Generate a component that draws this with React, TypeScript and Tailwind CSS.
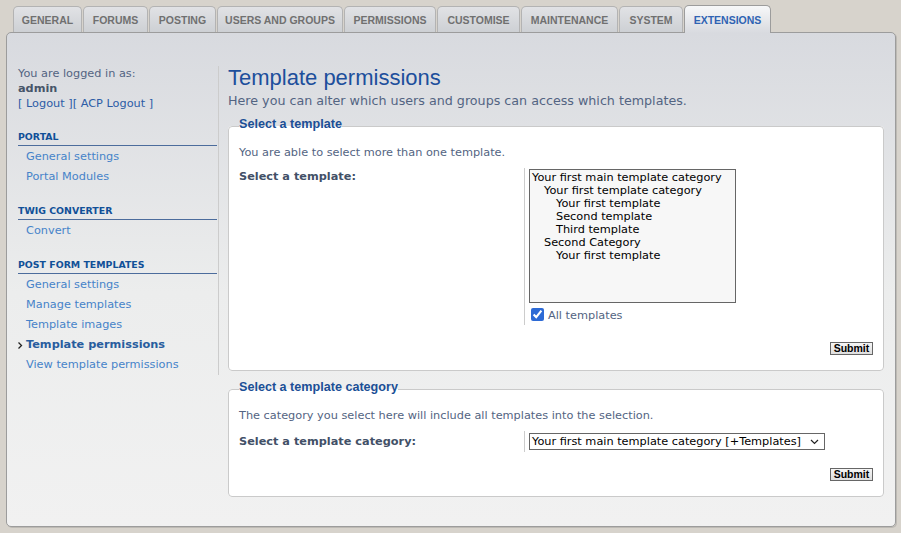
import React from 'react';

const tabs = [
  { label: 'GENERAL', width: 'w-[69px]' },
  { label: 'FORUMS', width: 'w-[65px]' },
  { label: 'POSTING', width: 'w-[67px]' },
  { label: 'USERS AND GROUPS', width: 'w-[126px]' },
  { label: 'PERMISSIONS', width: 'w-[92px]' },
  { label: 'CUSTOMISE', width: 'w-[83px]' },
  { label: 'MAINTENANCE', width: 'w-[97px]' },
  { label: 'SYSTEM', width: 'w-[64px]' },
  { label: 'EXTENSIONS', width: 'w-[87px]', active: true },
];

const menu = [
  { title: 'PORTAL', items: ['General settings', 'Portal Modules'] },
  { title: 'TWIG CONVERTER', items: ['Convert'] },
  {
    title: 'POST FORM TEMPLATES',
    items: ['General settings', 'Manage templates', 'Template images', 'Template permissions', 'View template permissions'],
  },
];

const activeItem = 'Template permissions';

const indents = ['pl-0', 'pl-[12px]', 'pl-[24px]'];

const templates = [
  { name: 'Your first main template category', depth: 0 },
  { name: 'Your first template category', depth: 1 },
  { name: 'Your first template', depth: 2 },
  { name: 'Second template', depth: 2 },
  { name: 'Third template', depth: 2 },
  { name: 'Second Category', depth: 1 },
  { name: 'Your first template', depth: 2 },
];

function SubmitButton() {
  return (
    <div className="mt-[17px] flex justify-end">
      <button className="flex h-[13px] w-[43px] items-center justify-center border border-[#666666] bg-[linear-gradient(#f6f6f6,#dedede)] font-['Liberation_Sans',sans-serif] text-[10.5px] leading-[11px] font-bold text-black">
        Submit
      </button>
    </div>
  );
}

function Legend({ children }: { children: React.ReactNode }) {
  return (
    <legend className="pb-[4px] font-['Liberation_Sans',sans-serif] text-[12.6px] leading-[16px] font-bold text-[#1b4f96]">
      {children}
    </legend>
  );
}

export default function App() {
  return (
    <div className="min-h-[533px] bg-[#d7d3cc] font-['DejaVu_Sans',sans-serif] text-[11.3px]">
      {/* Tabs */}
      <div className="flex h-[32px] items-end gap-px pl-[13px]">
        {tabs.map((tab) =>
          tab.active ? (
            <div
              key={tab.label}
              className={`relative z-10 -mb-px flex h-[28px] ${tab.width} items-start justify-center rounded-t-[5px] border-x border-t border-[#9c9c9c] bg-[linear-gradient(#f7f8f9,#d8dadf)] pt-[8px] font-['Liberation_Sans',sans-serif] text-[10.5px] leading-[13px] font-bold text-[#2f63b3]`}
            >
              {tab.label}
            </div>
          ) : (
            <div
              key={tab.label}
              className={`flex h-[26px] ${tab.width} items-start justify-center rounded-t-[5px] border-x border-t border-[#b3b3b3] bg-[linear-gradient(#e1e2e5,#cdd0d4)] pt-[7px] font-['Liberation_Sans',sans-serif] text-[10.5px] leading-[13px] font-bold text-[#707070]`}
            >
              {tab.label}
            </div>
          )
        )}
      </div>

      {/* Main panel */}
      <div className="ml-[6px] flex h-[495px] w-[890px] rounded-[5px] border border-[#9c9c9c] bg-[linear-gradient(180deg,#d8dadf_0px,#eceded_260px,#f1f1f1_100%)] pt-[32px] pl-[11px] shadow-[1px_1px_0_#bdbab4]">
        {/* Sidebar */}
        <div className="mt-px w-[201px] self-start border-r border-[#cccccc]">
          <div className="leading-[15px] text-[#536482]">
            <p>You are logged in as:</p>
            <p className="font-bold text-[#475569]">admin</p>
            <p className="text-[#2c5ca6]">[ Logout ][ ACP Logout ]</p>
          </div>

          {menu.map((block, i) => (
            <div key={block.title} className={i === 0 ? 'mt-[19px]' : 'mt-[17px]'}>
              <p className="mr-px border-b border-[#4c6c9c] pb-px text-[9.4px] leading-[14px] font-bold text-[#115098]">
                {block.title}
              </p>
              <ul className="pt-px">
                {block.items.map((item) =>
                  item === activeItem ? (
                    <li key={item} className="flex h-[20px] items-center font-bold text-[#285d9e]">
                      <svg width="8" height="7" viewBox="0 0 8 7" className="shrink-0">
                        <path d="M0.5 0.5 L3.5 3.5 L0.5 6.5" fill="none" stroke="#222222" strokeWidth="1.3" />
                      </svg>
                      {item}
                    </li>
                  ) : (
                    <li key={item} className="h-[20px] pl-[8px] leading-[20px] text-[#4683c9]">
                      {item}
                    </li>
                  )
                )}
              </ul>
            </div>
          ))}
        </div>

        {/* Content */}
        <div className="ml-[9px] w-[656px]">
          <h1 className="font-['Liberation_Sans',sans-serif] text-[22px] leading-[26px] text-[#1d4f9c]">
            Template permissions
          </h1>
          <p className="mt-[2px] text-[12.7px] leading-[15px] text-[#536482]">
            Here you can alter which users and groups can access which templates.
          </p>

          <fieldset className="mt-[8px] rounded-[4px] border border-[#cacaca] bg-white px-[10px] pt-[9px] pb-[15px]">
            <Legend>Select a template</Legend>
            <p className="leading-[15px] text-[#536482]">You are able to select more than one template.</p>
            <div className="mt-[8px] flex items-start">
              <div className="w-[285px] pt-px leading-[15px] font-bold text-[#425067]">Select a template:</div>
              <div className="border-l border-[#cccccc] pt-px pb-[2px] pl-[4px]">
                <div className="h-[134px] w-[207px] border border-[#666666] bg-[#f7f7f7] pt-px pl-[2px] leading-[13px] text-black">
                  {templates.map((t, i) => (
                    <div key={i} className={`whitespace-nowrap ${indents[t.depth]}`}>
                      {t.name}
                    </div>
                  ))}
                </div>
                <label className="mt-[5px] flex items-start gap-[4px] pl-[2px] leading-[15px] text-[#536482]">
                  <input type="checkbox" defaultChecked className="m-0 h-[13px] w-[13px] accent-[#2d6ad5]" />
                  All templates
                </label>
              </div>
            </div>
            <SubmitButton />
          </fieldset>

          <fieldset className="mt-[8px] rounded-[4px] border border-[#cacaca] bg-white px-[10px] pt-[9px] pb-[15px]">
            <Legend>Select a template category</Legend>
            <p className="leading-[15px] text-[#536482]">
              The category you select here will include all templates into the selection.
            </p>
            <div className="mt-[8px] flex items-center">
              <div className="w-[285px] leading-[15px] font-bold text-[#425067]">Select a template category:</div>
              <div className="border-l border-[#cccccc] py-[2px] pl-[4px]">
                <div className="flex h-[17px] w-[296px] items-center justify-between border border-[#666666] bg-white pr-[5px] pl-[2px] leading-[15px] text-black">
                  <span className="whitespace-nowrap">Your first main template category [+Templates]</span>
                  <svg width="9" height="6" viewBox="0 0 9 6" className="shrink-0">
                    <path d="M1 1 L4.5 4.5 L8 1" fill="none" stroke="#222222" strokeWidth="1.2" />
                  </svg>
                </div>
              </div>
            </div>
            <div className="-mt-px">
              <SubmitButton />
            </div>
          </fieldset>
        </div>
      </div>
    </div>
  );
}
